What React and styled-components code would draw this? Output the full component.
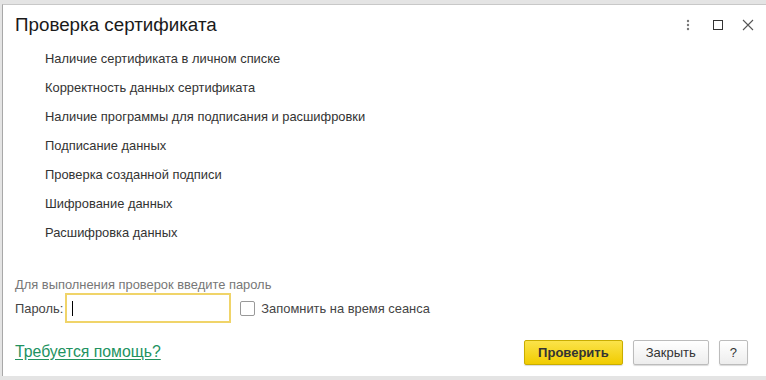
import React from "react";
import styled, { createGlobalStyle } from "styled-components";

const Global = createGlobalStyle`
  html, body { margin: 0; padding: 0; background: #e4e4e4; }
  body { font-family: "Liberation Sans", Arial, sans-serif; color: #333; }
`;

const Page = styled.div`
  width: 766px;
  height: 380px;
  padding: 4px 0 0 2px;
  box-sizing: border-box;
  overflow: hidden;
`;

const Window = styled.div`
  height: 372px;
  background: #fff;
  border-left: 1px solid #a8a8a8;
  border-top: 1px solid #c8c8c8;
  display: flex;
  flex-direction: column;
  padding: 0 0 0 12px;
  box-sizing: border-box;
`;

const Header = styled.div`
  display: flex;
  align-items: center;
  height: 39px;
  padding-right: 3px;
`;

const Title = styled.h1`
  flex: 1;
  margin: 0;
  font-size: 18.8px;
  font-weight: normal;
  color: #1a1a1a;
`;

const Tool = styled.div`
  width: 30px;
  height: 30px;
  display: flex;
  align-items: center;
  justify-content: center;
`;

const Checks = styled.ul`
  list-style: none;
  margin: 0;
  padding: 0 0 0 30px;
`;

const Check = styled.li`
  font-size: 12.9px;
  color: #333;
  height: 29px;
  line-height: 29px;
`;

const Hint = styled.div`
  margin-top: 30px;
  font-size: 12.9px;
  color: #777;
  line-height: 16px;
`;

const Row = styled.div`
  display: flex;
  align-items: center;
  margin-top: 0;
`;

const Label = styled.span`
  font-size: 12.9px;
  color: #444;
  margin-right: 2px;
`;

const Input = styled.div`
  width: 157px;
  height: 26px;
  border: 2px solid #f0d469;
  display: flex;
  align-items: center;
  padding-left: 5px;
`;

const Caret = styled.div`
  width: 1px;
  height: 15px;
  background: #000;
`;

const Box = styled.div`
  width: 13px;
  height: 13px;
  border: 1px solid #999;
  border-radius: 2px;
  margin: 0 6px 0 9px;
  background: #fff;
`;

const Footer = styled.div`
  display: flex;
  align-items: center;
  margin-top: 17px;
  padding-right: 18px;
`;

const Help = styled.a`
  flex: 1;
  font-size: 15.8px;
  color: #22925f;
  text-decoration: underline;
  text-underline-offset: 2px;
  margin-top: -2px;
`;

const Button = styled.button`
  height: 25px;
  margin-left: 10px;
  padding: 0 ${(p) => p.$pad}px;
  font-family: "Liberation Sans", Arial, sans-serif;
  font-size: 13px;
  font-weight: ${(p) => (p.$primary ? "bold" : "normal")};
  color: #333;
  border-radius: 2px;
  border: 1px solid ${(p) => (p.$primary ? "#c9ad00" : "#bcbcbc")};
  background: ${(p) =>
    p.$primary
      ? "linear-gradient(#fbe34a, #f1cc00)"
      : "linear-gradient(#ffffff, #ededed)"};
  box-shadow: 0 1px 1px rgba(0, 0, 0, 0.15);
`;

const items = [
  "Наличие сертификата в личном списке",
  "Корректность данных сертификата",
  "Наличие программы для подписания и расшифровки",
  "Подписание данных",
  "Проверка созданной подписи",
  "Шифрование данных",
  "Расшифровка данных",
];

export default function App() {
  return (
    <Page>
      <Global />
      <Window>
        <Header>
          <Title>Проверка сертификата</Title>
          <Tool>
            <svg width="4" height="12" viewBox="0 0 4 12">
              <circle cx="2" cy="2" r="1.2" fill="#777" />
              <circle cx="2" cy="6" r="1.2" fill="#777" />
              <circle cx="2" cy="10" r="1.2" fill="#777" />
            </svg>
          </Tool>
          <Tool>
            <svg width="10" height="10" viewBox="0 0 10 10">
              <rect x="0.5" y="0.5" width="9" height="9" fill="none" stroke="#333" />
            </svg>
          </Tool>
          <Tool>
            <svg width="12" height="12" viewBox="0 0 12 12">
              <path d="M1 1L11 11M11 1L1 11" stroke="#555" strokeWidth="1.1" />
            </svg>
          </Tool>
        </Header>
        <Checks>
          {items.map((t) => (
            <Check key={t}>{t}</Check>
          ))}
        </Checks>
        <Hint>Для выполнения проверок введите пароль</Hint>
        <Row>
          <Label>Пароль:</Label>
          <Input>
            <Caret />
          </Input>
          <Box />
          <Label>Запомнить на время сеанса</Label>
        </Row>
        <Footer>
          <Help>Требуется помощь?</Help>
          <Button $primary $pad={13}>Проверить</Button>
          <Button $pad={12}>Закрыть</Button>
          <Button $pad={10}>?</Button>
        </Footer>
      </Window>
    </Page>
  );
}
